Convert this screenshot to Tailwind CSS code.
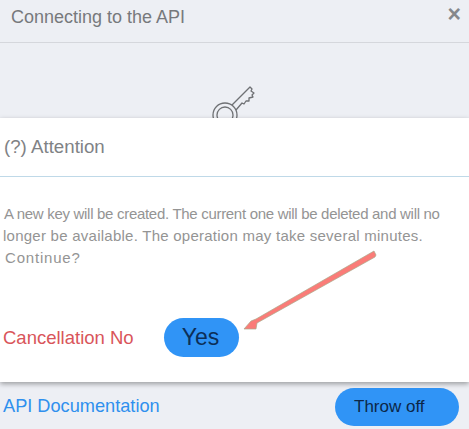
<!DOCTYPE html>
<html lang="en">
	<head>
		<meta charset="UTF-8" />
		<script src="https://cdn.jsdelivr.net/npm/@tailwindcss/browser@4"></script>
		<title>Connecting to the API</title>
	</head>
	<body class="font-['Liberation_Sans',Arial,sans-serif]">
		<div class="relative w-[469px] h-[429px] overflow-hidden bg-[#edeff4]">
			<!-- header -->
			<div class="flex justify-between h-[43px] border-b border-[#d5d7dc] pl-[11px] pr-[8px]">
				<span class="text-[18px] leading-[34px] text-[#77797c]">Connecting to the API</span>
				<span class="text-[23px] leading-[29px] font-bold text-[#85888c]">×</span>
			</div>
			<!-- key icon, cut off by the dialog -->
			<div class="flex justify-center h-[75px] overflow-hidden pt-[43px]">
				<svg class="ml-[2px]" width="50" height="50" viewBox="0 0 50 50" fill="none" stroke="#6f7174" stroke-width="1.3" stroke-linejoin="round">
					<circle cx="14" cy="29" r="12" />
					<circle cx="14" cy="29" r="8" />
					<path d="M21 19 L37 3 L39 1 L41 3 L40 5 L43 7 L41 9 L42 11 L38 12 L38 15 L35 15 L33 18 L31 17 L25 24" />
				</svg>
			</div>
			<!-- dialog -->
			<div class="h-[264px] bg-white shadow-[0_2px_5px_rgba(0,0,0,0.35)] relative">
				<div class="h-[59px] border-b border-[#bfd9e8] pl-[4px] pt-[16px] text-[18.7px] leading-[26px] text-[#808285]">(?) Attention</div>
				<div class="pt-[26px] text-[15px] leading-[22px] text-[#949494] h-[141px]">
					<p class="pl-[4px] tracking-[-0.3px]">A new key will be created. The current one will be deleted and will no</p>
					<p class="pl-[3px] tracking-[0.25px]">longer be available. The operation may take several minutes.</p>
					<p class="pl-[5px] tracking-[0.8px]">Continue?</p>
				</div>
				<div class="flex items-center pl-[3px]">
					<span class="w-[161px] text-[18.5px] text-[#d9555a]">Cancellation No</span>
					<button class="w-[75px] h-[39px] rounded-[20px] bg-[#3094f6] text-[23px] text-[#0c2f58] pr-[2px]">Yes</button>
				</div>
			</div>
			<!-- footer -->
			<div class="flex items-center justify-between pl-[3px] pr-[10px] h-[47px] pt-[3px]">
				<a class="text-[18.2px] text-[#2f90ee]">API Documentation</a>
				<button class="w-[124px] h-[38px] rounded-[19px] bg-[#3094f6] text-[17px] text-[#0c2748] text-left pl-[19px]">Throw off</button>
			</div>
			<!-- annotation arrow -->
			<svg class="absolute left-0 top-0 pointer-events-none" width="469" height="429">
				<path d="M376 255 L374 251 L256 319 L251 321 L244 329 L256 329 L257 323 L375 257 Z" fill="#fa7c78" stroke="#a9a98a" stroke-width="0.7" stroke-linejoin="round" />
			</svg>
		</div>
	</body>
</html>
